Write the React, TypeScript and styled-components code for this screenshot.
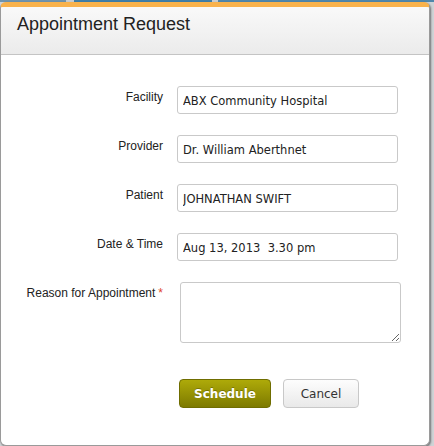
import React from 'react';
import styled, { createGlobalStyle } from 'styled-components';

const GlobalStyle = createGlobalStyle`
  html, body {
    margin: 0;
    padding: 0;
    background: #cfd3d6;
  }
`;

const Page = styled.div`
  width: 434px;
  height: 446px;
  overflow: hidden;
  display: flex;
  flex-direction: column;
`;

const Strip = styled.div<{ $height: number; $bg: string }>`
  height: ${(p) => p.$height}px;
  display: flex;
  background: ${(p) => p.$bg};
  flex-shrink: 0;
`;

const Segment = styled.div<{ $width: number; $color: string }>`
  width: ${(p) => p.$width}px;
  background: ${(p) => p.$color};
  flex-shrink: 0;
`;

const Modal = styled.div`
  width: 428px;
  height: 438px;
  background: #fff;
  border: 1px solid #9a9a9a;
  border-top: 5px solid #f9b24b;
  border-radius: 6px;
  box-shadow: 1px 1px 2px rgba(0, 0, 0, 0.45);
  display: flex;
  flex-direction: column;
  overflow: hidden;
  flex-shrink: 0;
`;

const Header = styled.div`
  height: 48px;
  box-sizing: border-box;
  padding: 6px 16px 0;
  background: linear-gradient(#f9f9f9, #ebebeb);
  border-bottom: 1px solid #c4c4c4;
  box-shadow: 0 1px 0 #fff;
`;

const Title = styled.h1`
  margin: 0;
  font-family: 'Liberation Sans', Arial, sans-serif;
  font-weight: normal;
  font-size: 18px;
  line-height: 22px;
  color: #222;
`;

const Form = styled.form`
  display: grid;
  grid-template-columns: 162px 221px;
  column-gap: 14px;
  row-gap: 21px;
  padding: 31px 0 0;
`;

const Label = styled.label`
  justify-self: end;
  padding-top: 4px;
  font-family: 'Liberation Sans', Arial, sans-serif;
  font-size: 12px;
  line-height: 14px;
  color: #222;
  white-space: nowrap;
`;

const Required = styled.span`
  color: #e0442c;
  margin-left: 3px;
`;

const fieldBase = `
  box-sizing: border-box;
  width: 221px;
  border: 1px solid #c9c9c9;
  border-radius: 3px;
  background: #fff;
  font-family: 'DejaVu Sans', 'Lucida Grande', sans-serif;
  font-size: 11.5px;
  color: #222;
  outline: none;
`;

const Input = styled.input`
  ${fieldBase}
  height: 28px;
  padding: 2px 5px 0;
  line-height: 24px;
`;

const TextArea = styled.textarea`
  ${fieldBase}
  height: 61px;
  margin-left: 3px;
  padding: 4px 5px;
  resize: vertical;
`;

const Actions = styled.div`
  grid-column: 2;
  display: flex;
  gap: 12px;
  margin-top: 15px;
  padding-left: 2px;
`;

const Button = styled.button<{ $primary?: boolean }>`
  height: 29px;
  box-sizing: border-box;
  padding: 0;
  border-radius: 4px;
  font-family: 'DejaVu Sans', 'Lucida Grande', sans-serif;
  font-size: 12px;
  font-weight: ${(p) => (p.$primary ? 'bold' : 'normal')};
  color: ${(p) => (p.$primary ? '#fff' : '#333')};
  border: 1px solid ${(p) => (p.$primary ? '#6f6d00' : '#c8c8c8')};
  background: ${(p) =>
    p.$primary
      ? 'linear-gradient(#aeaa09, #7d7a00)'
      : 'linear-gradient(#fdfdfd, #e9e9e9)'};
  text-shadow: ${(p) => (p.$primary ? '0 -1px 0 rgba(0,0,0,0.25)' : 'none')};
  width: ${(p) => (p.$primary ? 92 : 76)}px;
  cursor: pointer;
`;

const fields = [
  { label: 'Facility', value: 'ABX Community Hospital' },
  { label: 'Provider', value: 'Dr. William Aberthnet' },
  { label: 'Patient', value: 'JOHNATHAN SWIFT' },
  { label: 'Date & Time', value: 'Aug 13, 2013  3.30 pm' },
];

const App = () => {
  return (
    <Page>
      <GlobalStyle />
      <Strip $height={2} $bg="#4f86aa">
        <Segment $width={66} $color="#6f93ad" />
        <Segment $width={8} $color="#c9cdd0" />
        <Segment $width={138} $color="#3f7ea8" />
        <Segment $width={6} $color="#c9cdd0" />
      </Strip>
      <Modal>
        <Header>
          <Title>Appointment Request</Title>
        </Header>
        <Form onSubmit={(e) => e.preventDefault()}>
          {fields.map((f) => (
            <React.Fragment key={f.label}>
              <Label>{f.label}</Label>
              <Input defaultValue={f.value} />
            </React.Fragment>
          ))}
          <Label>
            Reason for Appointment<Required>*</Required>
          </Label>
          <TextArea />
          <Actions>
            <Button $primary type="submit">Schedule</Button>
            <Button type="button">Cancel</Button>
          </Actions>
        </Form>
      </Modal>
      <Strip $height={6} $bg="#d4d4d4">
        <Segment $width={71} $color="#dedede" />
        <Segment $width={1} $color="#9a9a9a" />
        <Segment $width={144} $color="#dedede" />
        <Segment $width={1} $color="#9a9a9a" />
        <Segment $width={144} $color="#dedede" />
        <Segment $width={1} $color="#9a9a9a" />
      </Strip>
    </Page>
  );
};

export default App;
